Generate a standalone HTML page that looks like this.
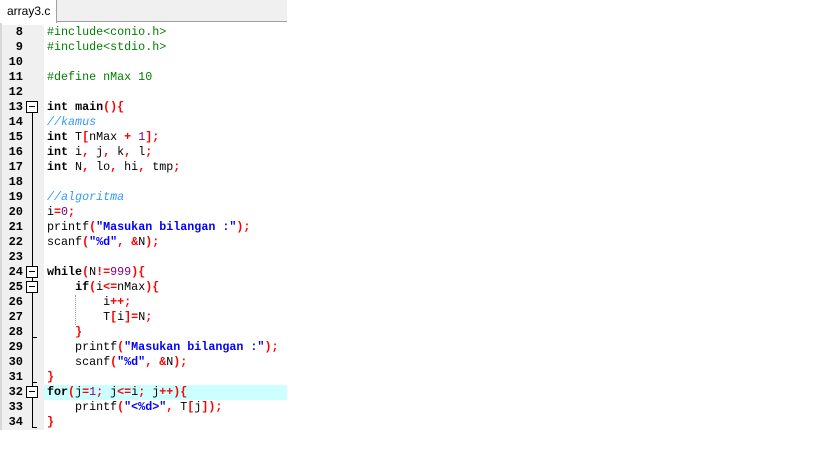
<!DOCTYPE html>
<html><head><style>
*{margin:0;padding:0;box-sizing:border-box}
body{width:819px;height:460px;background:#fff;position:relative;overflow:hidden;font-family:"Liberation Mono",monospace}
#tabbar{position:absolute;left:0;top:0;width:287px;height:22px;background:#f0f0f0;border-bottom:1px solid #a0a0a0}
#tab{position:absolute;left:0;top:0;width:57px;height:23px;background:#fff;border-right:1px solid #a0a0a0;font-family:"Liberation Sans",sans-serif;font-size:12px;padding:4px 0 0 7px;color:#000}
#ed{position:absolute;left:0;top:23px;width:287px;height:407px;background:#fff;border-left:2px solid #d8d8d8}
#gut{position:absolute;left:2px;top:25px;width:42px;height:405px;background:#f0f0f0}
.ln{position:absolute;left:2px;width:21px;text-align:right;font-size:12px;font-weight:bold;color:#000;line-height:15px}
.cl{position:absolute;left:47px;font-size:11.7px;line-height:15px;white-space:pre;color:#000}
b{font-weight:bold}
.o{color:#f00;font-weight:bold}
.n{color:#800080}
.s{color:#00f;font-weight:bold}
.p{color:#008000}
.c{color:#3399ff;font-style:italic}
.box{position:absolute;left:26px;width:12px;height:12px;border:1px solid #000;background:#fff}
.box:after{content:"";position:absolute;left:2px;top:4px;width:6px;height:1px;background:#000}
.vl{position:absolute;left:32px;width:1px;background:#000}
.tk{position:absolute;left:32px;width:5px;height:1px;background:#000}
</style></head><body>
<div id="tabbar"></div><div id="tab">array3.c</div>
<div id="ed"></div>
<div id="gut"></div>
<div style="position:absolute;left:44px;top:385px;width:243px;height:15px;background:#ccffff"></div>
<div style="position:absolute;left:75px;top:295px;width:0;height:30px;border-left:1px dotted #999"></div>
<div class="vl" style="top:107px;height:159px"></div>
<div class="vl" style="top:277px;height:150px"></div>
<div class="vl" style="top:392px;height:35px"></div>
<div class="tk" style="top:337px"></div>
<div class="tk" style="top:382px"></div>
<div class="tk" style="top:427px"></div>
<div class="box" style="top:101px"></div>
<div class="box" style="top:266px"></div>
<div class="box" style="top:281px"></div>
<div class="box" style="top:386px"></div>

<div class="ln" style="top:25px">8</div><div class="cl p" style="top:25px">#include&lt;conio.h&gt;</div>
<div class="ln" style="top:40px">9</div><div class="cl p" style="top:40px">#include&lt;stdio.h&gt;</div>
<div class="ln" style="top:55px">10</div>
<div class="ln" style="top:70px">11</div><div class="cl p" style="top:70px">#define nMax 10</div>
<div class="ln" style="top:85px">12</div>
<div class="ln" style="top:100px">13</div><div class="cl" style="top:100px"><b>int</b> <b>main</b><span class="o">(){</span></div>
<div class="ln" style="top:115px">14</div><div class="cl c" style="top:115px">//kamus</div>
<div class="ln" style="top:130px">15</div><div class="cl" style="top:130px"><b>int</b> T<span class="o">[</span>nMax <span class="o">+</span> <span class="n">1</span><span class="o">];</span></div>
<div class="ln" style="top:145px">16</div><div class="cl" style="top:145px"><b>int</b> i<span class="o">,</span> j<span class="o">,</span> k<span class="o">,</span> l<span class="o">;</span></div>
<div class="ln" style="top:160px">17</div><div class="cl" style="top:160px"><b>int</b> N<span class="o">,</span> lo<span class="o">,</span> hi<span class="o">,</span> tmp<span class="o">;</span></div>
<div class="ln" style="top:175px">18</div>
<div class="ln" style="top:190px">19</div><div class="cl c" style="top:190px">//algoritma</div>
<div class="ln" style="top:205px">20</div><div class="cl" style="top:205px">i<span class="o">=</span><span class="n">0</span><span class="o">;</span></div>
<div class="ln" style="top:220px">21</div><div class="cl" style="top:220px">printf<span class="o">(</span><span class="s">"Masukan bilangan :"</span><span class="o">);</span></div>
<div class="ln" style="top:235px">22</div><div class="cl" style="top:235px">scanf<span class="o">(</span><span class="s">"%d"</span><span class="o">,</span> <span class="o">&amp;</span>N<span class="o">);</span></div>
<div class="ln" style="top:250px">23</div>
<div class="ln" style="top:265px">24</div><div class="cl" style="top:265px"><b>while</b><span class="o">(</span>N<span class="o">!=</span><span class="n">999</span><span class="o">){</span></div>
<div class="ln" style="top:280px">25</div><div class="cl" style="top:280px">    <b>if</b><span class="o">(</span>i<span class="o">&lt;=</span>nMax<span class="o">){</span></div>
<div class="ln" style="top:295px">26</div><div class="cl" style="top:295px">        i<span class="o">++;</span></div>
<div class="ln" style="top:310px">27</div><div class="cl" style="top:310px">        T<span class="o">[</span>i<span class="o">]=</span>N<span class="o">;</span></div>
<div class="ln" style="top:325px">28</div><div class="cl" style="top:325px">    <span class="o">}</span></div>
<div class="ln" style="top:340px">29</div><div class="cl" style="top:340px">    printf<span class="o">(</span><span class="s">"Masukan bilangan :"</span><span class="o">);</span></div>
<div class="ln" style="top:355px">30</div><div class="cl" style="top:355px">    scanf<span class="o">(</span><span class="s">"%d"</span><span class="o">,</span> <span class="o">&amp;</span>N<span class="o">);</span></div>
<div class="ln" style="top:370px">31</div><div class="cl" style="top:370px"><span class="o">}</span></div>
<div class="ln" style="top:385px">32</div><div class="cl" style="top:385px"><b>for</b><span class="o">(</span>j<span class="o">=</span><span class="n">1</span><span class="o">;</span> j<span class="o">&lt;=</span>i<span class="o">;</span> j<span class="o">++){</span></div>
<div class="ln" style="top:400px">33</div><div class="cl" style="top:400px">    printf<span class="o">(</span><span class="s">"&lt;%d&gt;"</span><span class="o">,</span> T<span class="o">[</span>j<span class="o">]);</span></div>
<div class="ln" style="top:415px">34</div><div class="cl" style="top:415px"><span class="o">}</span></div>
</body></html>
